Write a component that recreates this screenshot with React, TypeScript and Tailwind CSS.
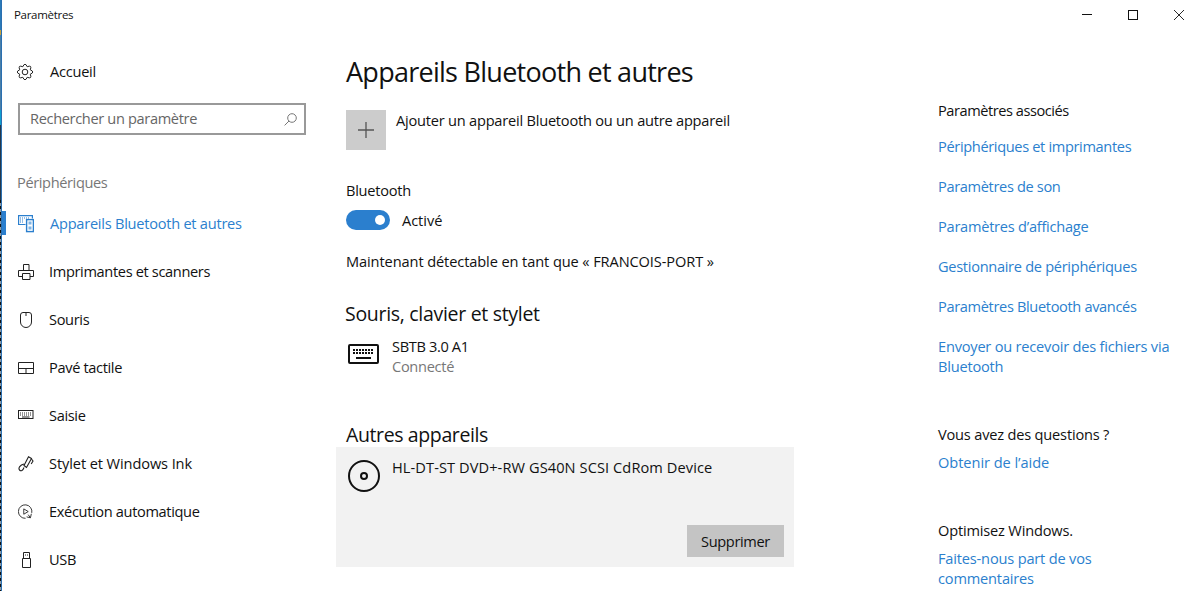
import React from 'react';

const font = { fontFamily: '"Open Sans", sans-serif' };

const gearPath = (() => {
  // 8 scalloped teeth round the centre
  const pts: string[] = [];
  for (let i = 0; i < 8; i++) {
    const a = (i * Math.PI) / 4 - Math.PI / 8;
    const b = a + Math.PI / 4;
    const x0 = 8 + 5.7 * Math.cos(a);
    const y0 = 8 + 5.7 * Math.sin(a);
    const x1 = 8 + 5.7 * Math.cos(b);
    const y1 = 8 + 5.7 * Math.sin(b);
    const mid = (a + b) / 2;
    const cx = 8 + 10.4 * Math.cos(mid);
    const cy = 8 + 10.4 * Math.sin(mid);
    pts.push(`${i === 0 ? `M${x0.toFixed(2)} ${y0.toFixed(2)}` : ''}Q${cx.toFixed(2)} ${cy.toFixed(2)} ${x1.toFixed(2)} ${y1.toFixed(2)}`);
  }
  return pts.join('') + 'z';
})();

function GearIcon() {
  return (
    <svg width="16" height="16" viewBox="0 0 16 16" fill="none" stroke="#222" strokeWidth="1">
      <circle cx="8" cy="8" r="2.800" />
      <path d={gearPath} />
    </svg>
  );
}

function BluetoothDevicesIcon() {
  return (
    <svg width="16" height="18" viewBox="0 0 16 18" fill="none" stroke="#2b7fce" strokeWidth="1.200">
      <path d="M7.500 9.500H.6V.6h13.800v3" />
      <path d="M2 3h10M2 5h4M2 7h4" strokeDasharray="1 1" />
      <rect x="8.600" y="4.600" width="6.800" height="12" strokeWidth="1.400" />
      <rect x="10.500" y="6.500" width="3" height="3" fill="#7fb4e4" stroke="none" />
      <rect x="10.500" y="11.500" width="3" height="3" fill="#7fb4e4" stroke="none" />
    </svg>
  );
}

function PrinterIcon() {
  return (
    <svg width="16" height="16" viewBox="0 0 16 16" fill="none" stroke="#222" strokeWidth="1">
      <path d="M5.500 6V.5h5.500V6M4 12.500H.5V6.500h15v6H12" />
      <path d="M4.500 9.500h7.500v6H4.500z" />
    </svg>
  );
}

function MouseIcon() {
  return (
    <svg width="16" height="16" viewBox="0 0 16 16" fill="none" stroke="#222" strokeWidth="1">
      <path d="M5 .5h6a2.500 2.500 0 0 1 2.500 2.500v7a5.500 5.500 0 0 1-11 0V3A2.500 2.500 0 0 1 5 .5z" />
      <path d="M8 .5v3.500" />
    </svg>
  );
}

function TouchpadIcon() {
  return (
    <svg width="16" height="16" viewBox="0 0 16 16" fill="none" stroke="#222" strokeWidth="1">
      <path d="M.5 2.500h15v11H.5zM.5 8.500h15M8 8.500v5" />
    </svg>
  );
}

function KeyboardIcon() {
  return (
    <svg width="16" height="16" viewBox="0 0 16 16" fill="none" stroke="#222" strokeWidth="1">
      <rect x="0.500" y="2.500" width="14.500" height="8" />
      <path d="M2 5h12M2 7h12" strokeDasharray="1 1" />
      <path d="M4 9h7.500" />
    </svg>
  );
}

function PenIcon() {
  return (
    <svg width="16" height="16" viewBox="0 0 16 16" fill="none" stroke="#222" strokeWidth="1.100">
      <path d="M6 9.500L10.500 .8l3 1.700L8.500 11.500z" />
      <path d="M6 8C2 9 0 12 1.500 14c1.500 1.500 3.500.5 4.500-2.500" />
      <path d="M13.500 3l1.500 2-1.800 3" />
    </svg>
  );
}

function AutoplayIcon() {
  return (
    <svg width="18" height="18" viewBox="0 0 18 18" fill="none" stroke="#222" strokeWidth="1">
      <path d="M8.500 16.100A7.600 7.600 0 1 1 15.500 10" />
      <path d="M6.500 5.500v6l5-3z" />
      <path d="M15 11l-1 4.500-4.300-1M13.800 15.300l-2.300-3.300" />
    </svg>
  );
}

function UsbIcon() {
  return (
    <svg width="16" height="16" viewBox="0 0 16 16" fill="none" stroke="#222" strokeWidth="1">
      <path d="M4.500 6.500h8v9h-8zM5.500 6.500V.5h6v6M7 3h1M9 3h1" />
    </svg>
  );
}

function SearchIcon() {
  return (
    <svg width="13" height="13" viewBox="0 0 13 13" fill="none" stroke="#777" strokeWidth="1">
      <circle cx="8" cy="5" r="4.300" />
      <path d="M5 8L.6 12.400" />
    </svg>
  );
}

function NavItem({ icon, label, active, className }: { icon: React.ReactNode; label: string; active?: boolean; className?: string }) {
  return (
    <div className="relative flex h-12 items-center pl-[16px]">
      {active && <div className="absolute left-0 top-[11px] h-[24px] w-[4px] bg-[#2b7fce]" />}
      <span className="flex w-4 items-center justify-start">{icon}</span>
      <span className={`text-[14.6px] ${active ? 'ml-[16px] text-[#2b7fce]' : 'ml-[15px] text-[#111]'} ${className ?? 'tracking-[-0.35px]'}`}>{label}</span>
    </div>
  );
}

function RelatedLink({ children, className }: { children: React.ReactNode; className?: string }) {
  return <a className={`block text-[14.6px] leading-5 text-[#2b7fce] ${className ?? 'tracking-[-0.35px]'}`}>{children}</a>;
}

// the sliver of desktop left visible by the window, on the far left
function DesktopSliver() {
  return (
    <div className="flex h-full w-[2px] shrink-0 border-r border-[#2a6fb0]">
      <div className="flex h-full w-px flex-col">
        <div className="h-[30px] bg-[#2a7ab8]" />
        <div className="h-[5px] bg-[#c9a23a]" />
        <div className="h-[75px] bg-[#4a7fa8]" />
        <div className="h-[15px] bg-[#0f9fd0]" />
        <div className="h-[75px] bg-[#26384a]" />
        <div className="flex-1 bg-[repeating-linear-gradient(180deg,#111_0,#111_3px,#8a9aa8_3px,#8a9aa8_6px)]" />
      </div>
    </div>
  );
}

export default function App() {
  return (
    <div style={font} className="flex h-[591px] w-[1201px] overflow-hidden bg-white text-[#111]">
      <DesktopSliver />
      <div className="flex min-w-0 flex-1 flex-col">
        <div className="flex h-[30px] shrink-0 items-center pl-[12px]">
          <span className="text-[11.5px] tracking-[-0.3px]">Paramètres</span>
          <div className="ml-auto flex items-center">
            <svg width="12" height="12" viewBox="0 0 12 12" className="mr-[34px]" stroke="#111">
              <path d="M1 5.500h10" />
            </svg>
            <svg width="12" height="12" viewBox="0 0 12 12" className="mr-[34px]" fill="none" stroke="#111">
              <rect x="1.500" y="1.500" width="9" height="9" />
            </svg>
            <svg width="12" height="12" viewBox="0 0 12 12" className="mr-[16px]" stroke="#111" strokeWidth="0.900">
              <path d="M1 1l10 10M11 1L1 11" />
            </svg>
          </div>
        </div>

        <div className="flex min-h-0 flex-1">
          <aside className="w-[334px] shrink-0">
            <div className="mt-[30px] flex h-[24px] items-center pl-[15px]">
              <GearIcon />
              <span className="ml-[17px] text-[14.6px] tracking-[-0.25px]">Accueil</span>
            </div>
            <div className="ml-[16px] mt-[19px] flex h-[32px] w-[288px] items-center border-2 border-[#999] pl-[10px] pr-[7px]">
              <span className="flex-1 text-[14.6px] tracking-[-0.35px] text-[#666]">Rechercher un paramètre</span>
              <SearchIcon />
            </div>
            <div className="ml-[15px] mt-[37px] text-[14.6px] leading-5 tracking-[-0.38px] text-[#777]">Périphériques</div>
            <div className="mt-[8px]">
              <NavItem active icon={<BluetoothDevicesIcon />} label="Appareils Bluetooth et autres" className="tracking-[-0.25px]" />
              <NavItem icon={<PrinterIcon />} label="Imprimantes et scanners" />
              <NavItem icon={<MouseIcon />} label="Souris" />
              <NavItem icon={<TouchpadIcon />} label="Pavé tactile" />
              <NavItem icon={<KeyboardIcon />} label="Saisie" />
              <NavItem icon={<PenIcon />} label="Stylet et Windows Ink" className="tracking-[-0.1px]" />
              <NavItem icon={<AutoplayIcon />} label="Exécution automatique" />
              <NavItem icon={<UsbIcon />} label="USB" />
            </div>
          </aside>

          <main className="w-[602px] shrink-0">
            <h1 className="ml-[10px] mt-[22px] text-[27px] leading-[40px] tracking-[-0.73px]">Appareils Bluetooth et autres</h1>
            <div className="ml-[10px] mt-[18px] flex">
              <div className="flex h-10 w-10 items-center justify-center bg-[#cccccc]">
                <svg width="16" height="16" viewBox="0 0 16 16" stroke="#555" strokeWidth="1.300">
                  <path d="M8 0v16M0 8h16" />
                </svg>
              </div>
              <span className="ml-[10px] text-[14.6px] leading-5 tracking-[-0.22px]">Ajouter un appareil Bluetooth ou un autre appareil</span>
            </div>
            <div className="ml-[10px] mt-[30px] text-[14.6px] leading-5 tracking-[-0.25px]">Bluetooth</div>
            <div className="ml-[10px] mt-[10px] flex items-center">
              <div className="flex h-5 w-11 items-center justify-end rounded-full bg-[#2b7fce] pr-[5px]">
                <div className="h-[10px] w-[10px] rounded-full bg-white" />
              </div>
              <span className="ml-[12px] text-[14.6px] leading-5 tracking-[-0.05px]">Activé</span>
            </div>
            <div className="ml-[10px] mt-[21px] text-[14.6px] leading-5 tracking-[-0.1px]">Maintenant détectable en tant que « FRANCOIS-PORT »</div>
            <h2 className="ml-[9px] mt-[30px] text-[19.5px] leading-[26px] tracking-[-0.3px]">Souris, clavier et stylet</h2>
            <div className="ml-[12px] mt-[9px] flex">
              <svg width="32" height="32" viewBox="0 0 32 32" className="mt-[2px]" fill="none" stroke="#111">
                <rect x="1" y="7" width="29" height="18" strokeWidth="2" rx="1" />
                <path d="M5 12h21M5 15h21" strokeDasharray="2 1" strokeWidth="2" />
                <path d="M8 20h15" strokeWidth="2" />
              </svg>
              <div className="ml-[12px]">
                <div className="text-[14.6px] leading-5 tracking-[-0.35px]">SBTB 3.0 A1</div>
                <div className="text-[14.6px] leading-5 tracking-[-0.3px] text-[#777]">Connecté</div>
              </div>
            </div>
            <h2 className="ml-[10px] mt-[46px] text-[19.5px] leading-[25px] tracking-[-0.38px]">Autres appareils</h2>
            <div className="flex h-[120px] w-[458px] flex-col bg-[#f2f2f2] pl-[12px] pr-[10px]">
              <div className="flex">
                <svg width="32" height="32" viewBox="0 0 32 32" className="mt-[13px]" fill="none" stroke="#111" strokeWidth="2">
                  <circle cx="16" cy="16" r="15" />
                  <circle cx="16" cy="16" r="3" />
                </svg>
                <span className="ml-[12px] mt-[10px] text-[14.6px] leading-5 tracking-[0.09px]">HL-DT-ST DVD+-RW GS40N SCSI CdRom Device</span>
              </div>
              <div className="mb-[10px] mt-auto flex justify-end">
                <div className="flex h-8 w-[97px] items-center justify-center bg-[#c4c4c4] pt-[2px] text-[14.6px] tracking-[-0.35px]">Supprimer</div>
              </div>
            </div>
          </main>

          <aside className="flex-1">
            <div className="mt-[70px] text-[14.6px] leading-5 tracking-[-0.45px]">Paramètres associés</div>
            <div className="mt-4 flex flex-col gap-5">
              <RelatedLink>Périphériques et imprimantes</RelatedLink>
              <RelatedLink>Paramètres de son</RelatedLink>
              <RelatedLink className="tracking-[-0.25px]">Paramètres d’affichage</RelatedLink>
              <RelatedLink className="tracking-[-0.3px]">Gestionnaire de périphériques</RelatedLink>
              <RelatedLink>Paramètres Bluetooth avancés</RelatedLink>
              <RelatedLink className="tracking-[-0.21px]">Envoyer ou recevoir des fichiers via<br />Bluetooth</RelatedLink>
            </div>
            <div className="mt-[48px] text-[14.6px] leading-5 tracking-[-0.19px]">Vous avez des questions ?</div>
            <div className="mt-2"><RelatedLink className="tracking-[-0.05px]">Obtenir de l’aide</RelatedLink></div>
            <div className="mt-[48px] text-[14.6px] leading-5 tracking-[-0.18px]">Optimisez Windows.</div>
            <div className="mt-2"><RelatedLink className="tracking-[-0.18px]">Faites-nous part de vos<br />commentaires</RelatedLink></div>
          </aside>
        </div>
      </div>
    </div>
  );
}
